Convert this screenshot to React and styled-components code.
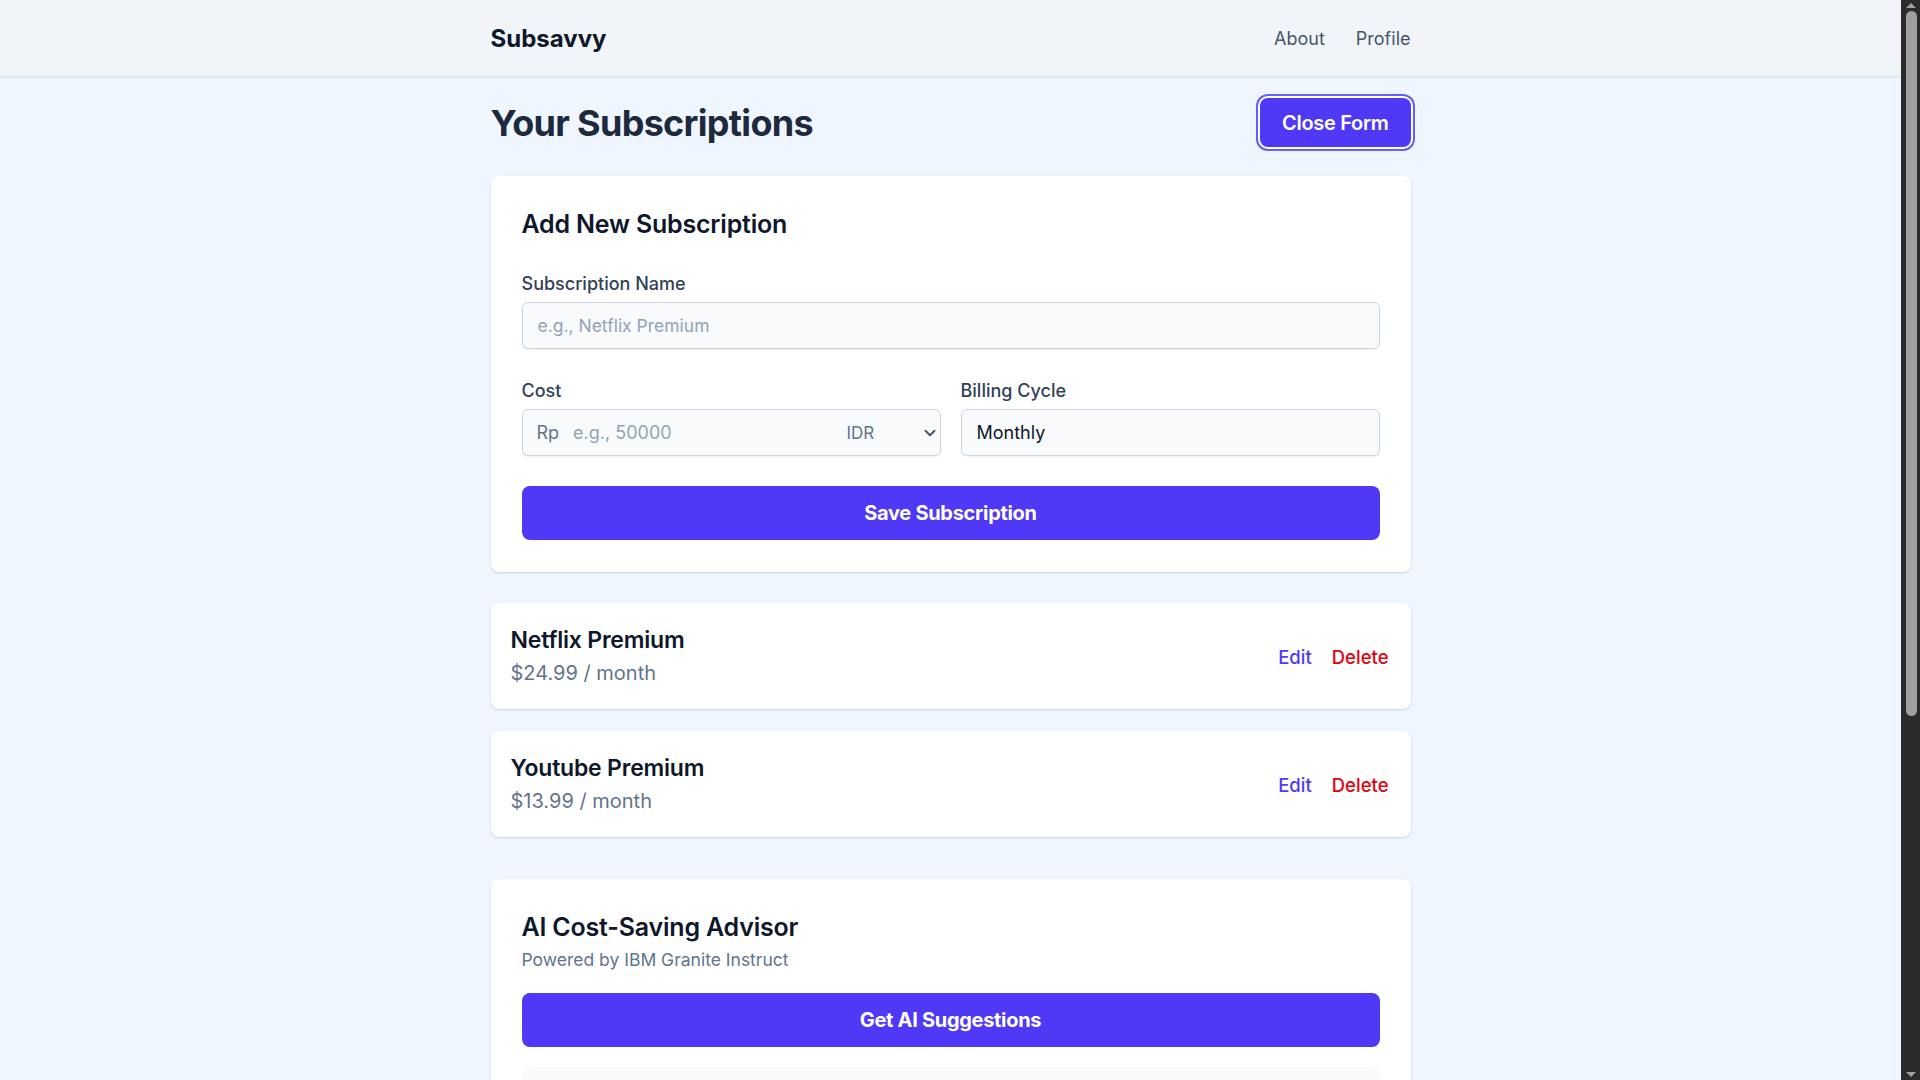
import React from 'react'
import styled, { createGlobalStyle } from 'styled-components'
import { ChevronDown } from 'lucide-react'

const GlobalStyle = createGlobalStyle`
  body {
    margin: 0;
    padding-right: 19px;
    background: #eff6ff;
    font-family: Inter, "Noto Sans", sans-serif;
    color: #0f172b;
  }
  * {
    box-sizing: border-box;
  }
`

// the window's own scrollbar, as in the screenshot
const ScrollTrack = styled.div`
  position: fixed;
  top: 0;
  right: 0;
  width: 19px;
  height: 100vh;
  background: #2b2b2b;
  display: flex;
  flex-direction: column;
  align-items: center;
  padding: 3px 0;
  z-index: 10;
`

const ScrollArrow = styled.div`
  width: 0;
  height: 0;
  border-left: 5px solid transparent;
  border-right: 5px solid transparent;
  ${(p) => (p.$down ? 'border-top: 5px solid #9f9f9f;' : 'border-bottom: 5px solid #9f9f9f;')}
  margin-top: ${(p) => (p.$down ? 'auto' : '0')};
`

const ScrollThumb = styled.div`
  width: 11px;
  height: 705px;
  margin-top: 3px;
  margin-left: 2px;
  border-radius: 6px;
  background: #9f9f9f;
`

const Header = styled.header`
  background: #f1f5f9;
  height: 76px;
  box-shadow: 0 1px 3px rgba(15, 23, 43, 0.12);
`

const Container = styled.div`
  width: 920px;
  margin: 0 auto;
`

const HeaderInner = styled(Container)`
  height: 100%;
  display: flex;
  align-items: center;
  justify-content: space-between;
`

const Brand = styled.div`
  font-size: 24px;
  font-weight: 700;
  color: #0f172b;
`

const Nav = styled.nav`
  display: flex;
  gap: 31px;
`

const NavLink = styled.a`
  font-size: 18px;
  color: #45556c;
  text-decoration: none;
`

const Main = styled(Container)`
  padding: 22px 0 60px;
`

const TitleRow = styled.div`
  display: flex;
  align-items: center;
  justify-content: space-between;
  margin-bottom: 29px;
`

const PageTitle = styled.h1`
  margin: 0;
  font-size: 36px;
  line-height: 44px;
  font-weight: 700;
  letter-spacing: -0.7px;
  color: #1d293d;
`

const Button = styled.button`
  border: none;
  background: #4f39f6;
  color: #fff;
  font-family: inherit;
  font-weight: ${(p) => (p.$block ? 700 : 600)};
  font-size: 20px;
  border-radius: 8px;
  cursor: pointer;
  letter-spacing: -0.3px;
  box-shadow: ${(p) => (p.$focused ? '0 0 0 2px #fff, 0 0 0 4px #615fff' : 'none')};
  width: ${(p) => (p.$block ? '100%' : 'auto')};
  height: ${(p) => (p.$block ? '54px' : '49px')};
  padding: 0 22px;
`

const Card = styled.section`
  background: #fff;
  border-radius: 8px;
  box-shadow: 0 1px 3px rgba(15, 23, 43, 0.1), 0 1px 2px rgba(15, 23, 43, 0.06);
  padding: 32px 31px;
`

const CardTitle = styled.h2`
  margin: 0;
  font-size: 25px;
  line-height: 32px;
  font-weight: 600;
  letter-spacing: -0.2px;
  color: #0f172b;
`

const Form = styled.form`
  display: flex;
  flex-direction: column;
  gap: 30px;
  margin-top: 32px;
`

const FieldRow = styled.div`
  display: grid;
  grid-template-columns: minmax(0, 1fr) minmax(0, 1fr);
  gap: 20px;
`

const Field = styled.div`
  display: flex;
  flex-direction: column;
  gap: 6px;
`

const Label = styled.label`
  font-size: 18px;
  line-height: 24px;
  font-weight: 500;
  color: #314158;
`

const inputBox = `
  height: 47px;
  border: 1px solid #cad5e2;
  border-radius: 6px;
  background: #f8fafc;
  box-shadow: 0 1px 2px rgba(15, 23, 43, 0.06);
`

const TextInput = styled.input`
  ${inputBox}
  width: 100%;
  padding: 0 15px;
  font-family: inherit;
  font-size: 17.5px;
  color: #0f172b;
  outline: none;
  &::placeholder {
    color: #94a3b8;
  }
`

const Select = styled.select`
  ${inputBox}
  width: 100%;
  padding: 0 15px;
  font-family: inherit;
  font-size: 18px;
  color: #0f172b;
  appearance: none;
  outline: none;
`

const CostBox = styled.div`
  ${inputBox}
  display: flex;
  align-items: center;
  padding: 0 1px 0 14px;
  color: #62748e;
`

const Prefix = styled.span`
  font-size: 18px;
  margin-right: 12px;
`

const BareInput = styled.input`
  flex: 1;
  min-width: 0;
  border: none;
  background: transparent;
  font-family: inherit;
  font-size: 18px;
  color: #0f172b;
  outline: none;
  &::placeholder {
    color: #94a3b8;
  }
`

const Currency = styled.select`
  border: none;
  background: transparent;
  font-family: inherit;
  font-size: 17px;
  color: #62748e;
  appearance: none;
  outline: none;
  width: 74px;
`

const List = styled.div`
  display: flex;
  flex-direction: column;
  gap: 22px;
  margin: 31px 0 42px;
`

const SubCard = styled.div`
  background: #fff;
  border-radius: 8px;
  box-shadow: 0 1px 3px rgba(15, 23, 43, 0.1), 0 1px 2px rgba(15, 23, 43, 0.06);
  padding: 23px 22px 22px 20px;
  display: flex;
  align-items: center;
  justify-content: space-between;
`

const SubName = styled.div`
  font-size: 23px;
  line-height: 28px;
  font-weight: 600;
  letter-spacing: -0.2px;
  color: #0f172b;
`

const SubPrice = styled.div`
  margin-top: 5px;
  font-size: 20px;
  line-height: 28px;
  color: #62748e;
`

const Actions = styled.div`
  display: flex;
  gap: 20px;
`

const Action = styled.button`
  border: none;
  background: none;
  padding: 0;
  font-family: inherit;
  font-size: 18.5px;
  font-weight: 500;
  cursor: pointer;
  color: ${(p) => (p.$danger ? '#e7000b' : '#4f39f6')};
`

const Subtitle = styled.p`
  margin: 5px 0 21px;
  font-size: 17.5px;
  line-height: 24px;
  color: #62748e;
`

const ResultBox = styled.div`
  margin-top: 20px;
  background: #f8fafc;
  border-radius: 8px;
  min-height: 480px;
`

const subscriptions = [
  { name: 'Netflix Premium', price: '$24.99', cycle: 'month' },
  { name: 'Youtube Premium', price: '$13.99', cycle: 'month' }
]

const App = () => {
  return (
    <>
      <GlobalStyle />
      <Header>
        <HeaderInner>
          <Brand>Subsavvy</Brand>
          <Nav>
            <NavLink href="#">About</NavLink>
            <NavLink href="#">Profile</NavLink>
          </Nav>
        </HeaderInner>
      </Header>

      <Main as="main">
        <TitleRow>
          <PageTitle>Your Subscriptions</PageTitle>
          <Button $focused>Close Form</Button>
        </TitleRow>

        <Card>
          <CardTitle>Add New Subscription</CardTitle>
          <Form onSubmit={(e) => e.preventDefault()}>
            <Field>
              <Label>Subscription Name</Label>
              <TextInput placeholder="e.g., Netflix Premium" />
            </Field>
            <FieldRow>
              <Field>
                <Label>Cost</Label>
                <CostBox>
                  <Prefix>Rp</Prefix>
                  <BareInput placeholder="e.g., 50000" />
                  <Currency defaultValue="IDR">
                    <option>IDR</option>
                    <option>USD</option>
                  </Currency>
                  <ChevronDown size={18} strokeWidth={2.5} color="#45556c" />
                </CostBox>
              </Field>
              <Field>
                <Label>Billing Cycle</Label>
                <Select defaultValue="Monthly">
                  <option>Monthly</option>
                  <option>Yearly</option>
                </Select>
              </Field>
            </FieldRow>
            <Button $block type="submit">Save Subscription</Button>
          </Form>
        </Card>

        <List>
          {subscriptions.map((sub) => (
            <SubCard key={sub.name}>
              <div>
                <SubName>{sub.name}</SubName>
                <SubPrice>{`${sub.price} / ${sub.cycle}`}</SubPrice>
              </div>
              <Actions>
                <Action>Edit</Action>
                <Action $danger>Delete</Action>
              </Actions>
            </SubCard>
          ))}
        </List>

        <Card>
          <CardTitle>AI Cost-Saving Advisor</CardTitle>
          <Subtitle>Powered by IBM Granite Instruct</Subtitle>
          <Button $block>Get AI Suggestions</Button>
          <ResultBox />
        </Card>
      </Main>

      <ScrollTrack aria-hidden="true">
        <ScrollArrow />
        <ScrollThumb />
        <ScrollArrow $down />
      </ScrollTrack>
    </>
  )
}

export default App
